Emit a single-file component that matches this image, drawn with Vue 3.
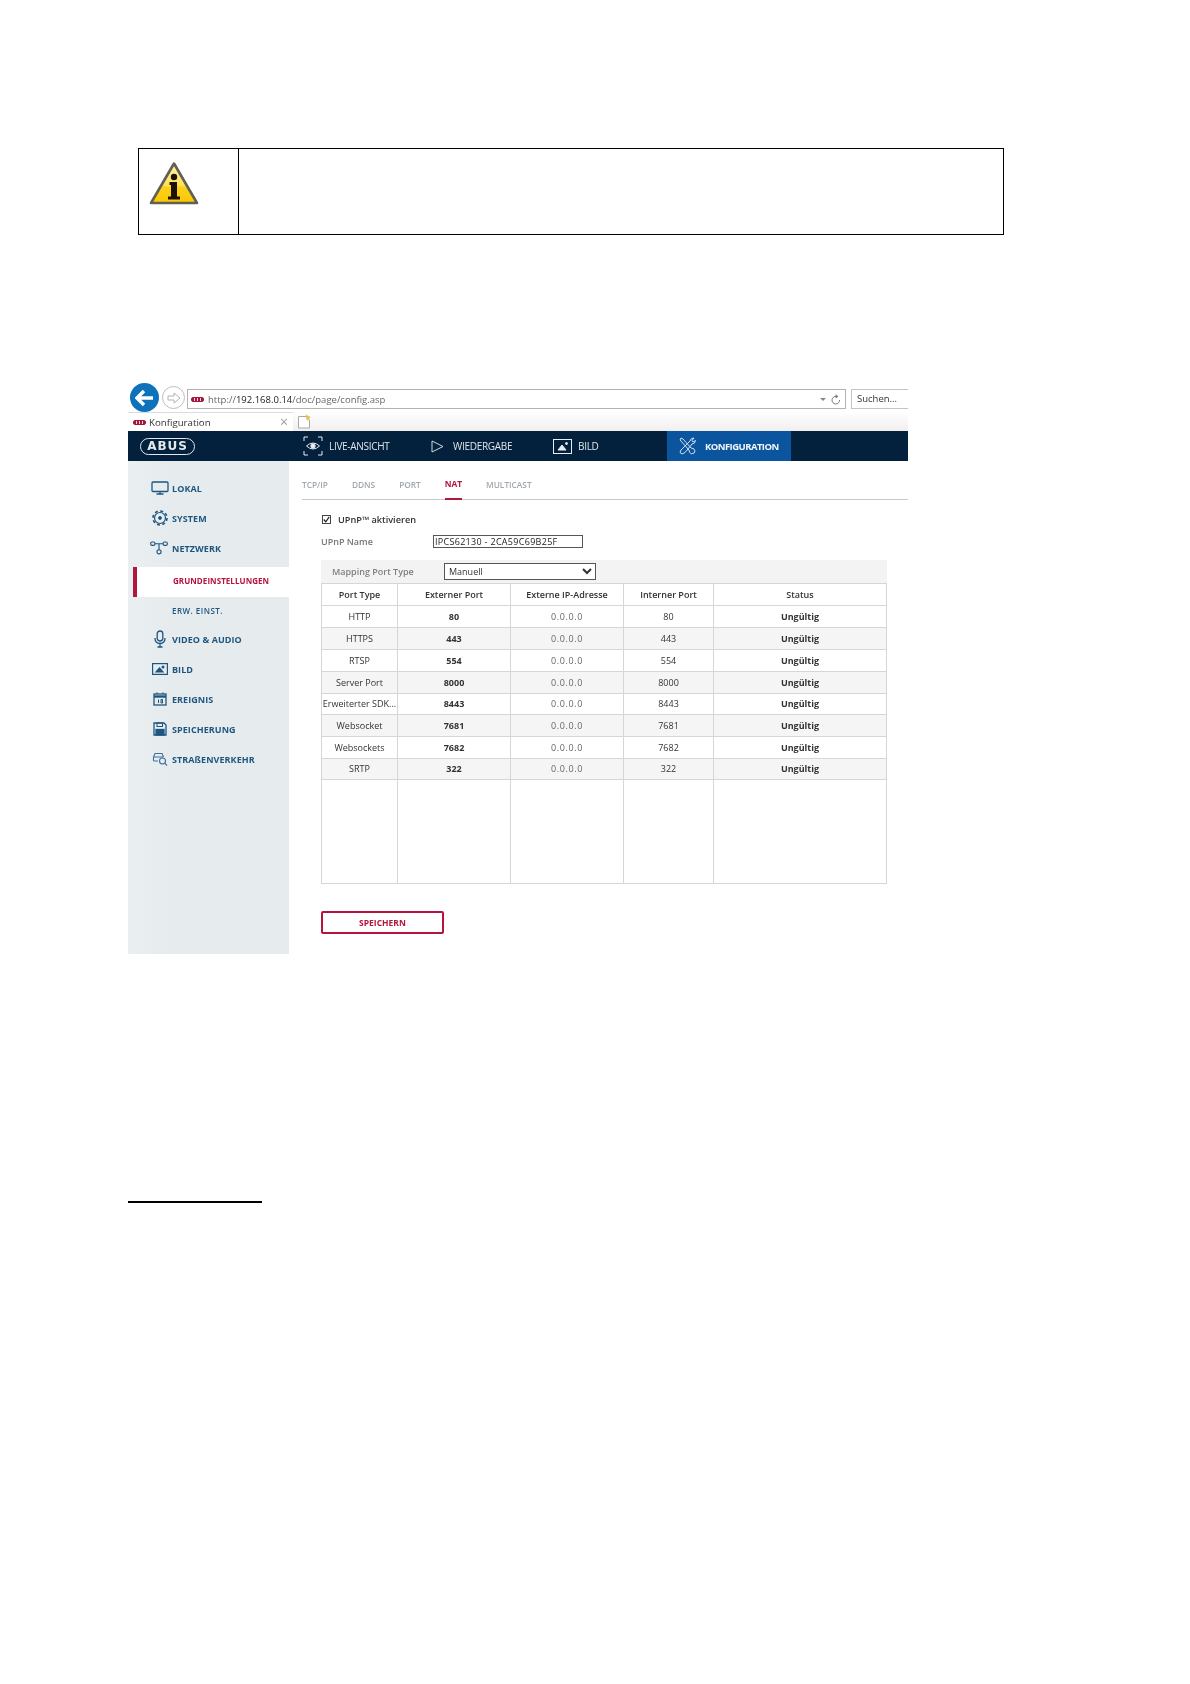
<script setup>
const rows = [
  ['HTTP', '80', '0.0.0.0', '80', 'Ungültig'],
  ['HTTPS', '443', '0.0.0.0', '443', 'Ungültig'],
  ['RTSP', '554', '0.0.0.0', '554', 'Ungültig'],
  ['Server Port', '8000', '0.0.0.0', '8000', 'Ungültig'],
  ['Erweiterter SDK...', '8443', '0.0.0.0', '8443', 'Ungültig'],
  ['Websocket', '7681', '0.0.0.0', '7681', 'Ungültig'],
  ['Websockets', '7682', '0.0.0.0', '7682', 'Ungültig'],
  ['SRTP', '322', '0.0.0.0', '322', 'Ungültig'],
]
const tabs = ['TCP/IP', 'DDNS', 'PORT', 'NAT', 'MULTICAST']
</script>

<template>
  <div class="page">
    <div class="note">
      <div class="note-icon">
        <svg width="52" height="46" viewBox="0 0 52 46">
          <defs>
            <linearGradient id="warn" x1="0" y1="0" x2="0" y2="1">
              <stop offset="0" stop-color="#fff4a8" />
              <stop offset="0.55" stop-color="#fde05a" />
              <stop offset="0.6" stop-color="#fbd11c" />
              <stop offset="1" stop-color="#f8c800" />
            </linearGradient>
          </defs>
          <path d="M26 2.5 L49 42 H3 Z" fill="url(#warn)" stroke="#625f55" stroke-width="2.6" stroke-linejoin="round" />
          <circle cx="26" cy="16" r="3.2" fill="#1a1206" />
          <path d="M21.5 21 H29 V35.5 H32 V38.5 H20 V35.5 H23 V24 H21.5 Z" fill="#1a1206" />
        </svg>
      </div>
      <div class="note-text"></div>
    </div>

    <div class="shot">
      <div class="browser">
        <div class="back">
          <svg width="20" height="18" viewBox="0 0 20 18"><path d="M9 2 L2 9 L9 16 M2.5 9 H18" fill="none" stroke="#fff" stroke-width="3.4" /></svg>
        </div>
        <div class="forward">
          <svg width="14" height="12" viewBox="0 0 14 12"><path d="M1 4 H7 V1 L13 6 L7 11 V8 H1 Z" fill="none" stroke="#b4b4b4" stroke-width="1" /></svg>
        </div>
        <div class="address">
          <span class="favicon"></span>
          <span class="url">http://<b>192.168.0.14</b>/doc/page/config.asp</span>
          <span class="addr-tools">
            <span class="caret"></span>
            <svg width="10" height="11" viewBox="0 0 10 11"><path d="M8.6 6 A3.8 3.8 0 1 1 5.4 2.4" fill="none" stroke="#777" stroke-width="1" /><path d="M4.6 0.3 L7.4 2.4 L4.6 4.4 Z" fill="#777" /></svg>
          </span>
        </div>
        <div class="search">Suchen...</div>
      </div>

      <div class="tabstrip">
        <div class="tab">
          <span class="favicon"></span>
          <span class="tab-title">Konfiguration</span>
          <span class="tab-x">×</span>
        </div>
        <svg class="newtab" width="14" height="15" viewBox="0 0 14 15"><path d="M1.5 2.5 H9 L12.5 6 V14 H1.5 Z" fill="#fff" stroke="#a9a9a9" /><path d="M8.5 0.5 L13.5 3 L10 7 Z" fill="#e9c04e" /></svg>
      </div>

      <div class="nav">
        <div class="logo-cell"><div class="logo">ABUS</div></div>
        <div class="nav-item">
          <svg width="20" height="20" viewBox="0 0 20 20" fill="none" stroke="#e8edf2" stroke-width="1">
            <path d="M1 5 V1 H5 M15 1 H19 V5 M19 15 V19 H15 M5 19 H1 V15" />
            <path d="M3.5 10 Q10 4 16.5 10 Q10 16 3.5 10 Z" />
            <circle cx="10" cy="10" r="2.2" fill="#e8edf2" />
          </svg>
          <span>LIVE-ANSICHT</span>
        </div>
        <div class="nav-item">
          <svg width="13" height="13" viewBox="0 0 13 13" fill="none" stroke="#d0d8e0" stroke-width="1"><path d="M1 1 L12 6.5 L1 12 Z" /></svg>
          <span class="wide-gap">WIEDERGABE</span>
        </div>
        <div class="nav-item">
          <svg width="19" height="15" viewBox="0 0 19 15" fill="none" stroke="#e8edf2" stroke-width="1">
            <rect x="0.5" y="0.5" width="18" height="14" />
            <path d="M5 11 L9 6 L13 11 Z" fill="#e8edf2" />
            <circle cx="13.5" cy="4.5" r="1" fill="#e8edf2" />
          </svg>
          <span>BILD</span>
        </div>
        <div class="nav-item active">
          <svg width="17" height="18" viewBox="0 0 17 18" fill="none" stroke="#cfe0f2" stroke-width="1">
            <path d="M2 1 L1 3 L10 13 Q10 16 12.5 16.8 Q15.8 16.8 16 14 Q15.5 11 12 11 L4 2 Z" />
            <path d="M15 1 Q11.5 1 11 4 L2 13 L1 15.5 L3 17 L6 15.5 L13 7 Q16 7 16.5 3.5 L14 5 L13 3.5 Z" />
          </svg>
          <span>KONFIGURATION</span>
        </div>
      </div>

      <div class="main">
        <aside class="side">
          <div class="side-item">
            <svg width="18" height="14" viewBox="0 0 18 14" fill="none" stroke="#1e5680" stroke-width="1.3"><rect x="1" y="1" width="16" height="9.5" rx="1" /><path d="M9 10.5 V13 M5.5 13 H12.5" /></svg>
            <span>LOKAL</span>
          </div>
          <div class="side-item">
            <svg width="17" height="16" viewBox="0 0 17 16" fill="none" stroke="#1e5680"><circle cx="8.5" cy="8" r="5.5" stroke-width="1.2" /><circle cx="8.5" cy="8" r="7" stroke-width="1.6" stroke-dasharray="3 2.5" /><circle cx="8.5" cy="8" r="1.4" fill="#1e5680" /></svg>
            <span>SYSTEM</span>
          </div>
          <div class="side-item net">
            <svg width="19" height="14" viewBox="0 0 19 14" fill="none" stroke="#1e5680" stroke-width="1.2"><rect x="0.7" y="0.7" width="4.5" height="3.6" rx="1.5" /><rect x="13.8" y="0.7" width="4.5" height="3.6" rx="1.5" /><circle cx="9.5" cy="11" r="2.2" /><path d="M5.2 2.5 H13.8 M9.5 2.5 V8.8" /></svg>
            <span>NETZWERK</span>
          </div>
          <div class="side-sub current"><span>GRUNDEINSTELLUNGEN</span></div>
          <div class="side-sub erw"><span>ERW. EINST.</span></div>
          <div class="side-item video">
            <svg width="12" height="18" viewBox="0 0 12 18" fill="none" stroke="#1e5680" stroke-width="1.3"><rect x="3.2" y="1" width="5.6" height="10" rx="2.8" /><path d="M1 8 Q1 13.5 6 13.5 Q11 13.5 11 8 M6 13.5 V17 M3.5 17 H8.5" /></svg>
            <span>VIDEO &amp; AUDIO</span>
          </div>
          <div class="side-item">
            <svg width="16" height="12" viewBox="0 0 16 12" fill="none" stroke="#1e5680" stroke-width="1.2"><rect x="0.6" y="0.6" width="14.8" height="10.8" /><path d="M4 9 L7.5 5 L11 9 Z" fill="#1e5680" /><circle cx="11" cy="4" r="0.9" fill="#1e5680" /></svg>
            <span>BILD</span>
          </div>
          <div class="side-item">
            <svg width="14" height="14" viewBox="0 0 14 14" fill="none" stroke="#1e5680" stroke-width="1.3"><rect x="1" y="2" width="12" height="11" /><path d="M1 4.5 H13" stroke-width="2.4" /><path d="M4 0.5 V2 M10 0.5 V2" /><path d="M5.5 7.5 V11 M8 7.5 H9.5 V11 H8 Z" stroke-width="1" /></svg>
            <span>EREIGNIS</span>
          </div>
          <div class="side-item">
            <svg width="14" height="14" viewBox="0 0 14 14" fill="none" stroke="#1e5680" stroke-width="1.3"><path d="M1 1 H11 L13 3 V13 H1 Z" /><rect x="4" y="1" width="5.5" height="3.5" stroke-width="1" /><rect x="3" y="7.5" width="8" height="5.5" fill="#1e5680" /></svg>
            <span>SPEICHERUNG</span>
          </div>
          <div class="side-item">
            <svg width="16" height="14" viewBox="0 0 16 14" fill="none" stroke="#3f7199" stroke-width="1.1"><path d="M1.5 9 V5 L3 1.5 H10 L11.5 5 M1.5 5 H11.5 M1.5 9 H6" /><circle cx="10.5" cy="9" r="3" /><path d="M12.7 11.2 L15 13.5" /></svg>
            <span>STRAßENVERKEHR</span>
          </div>
        </aside>

        <section class="content">
          <div class="ctabs">
            <span v-for="t in tabs" :key="t" class="ctab" :class="{ on: t === 'NAT' }">{{ t }}</span>
          </div>
          <div class="form">
            <div class="check-row">
              <span class="check">
                <svg width="7" height="7" viewBox="0 0 7 7"><path d="M0.8 3.5 L2.8 5.8 L6.2 0.8" fill="none" stroke="#222" stroke-width="1.2" /></svg>
              </span>
              <span>UPnP™ aktivieren</span>
            </div>
            <div class="name-row">
              <span class="name-label">UPnP Name</span>
              <input class="name-input" type="text" value="IPCS62130 - 2CA59C69B25F" />
            </div>
            <div class="map-row">
              <span class="map-label">Mapping Port Type</span>
              <select class="map-select"><option>Manuell</option></select>
            </div>
            <table class="ports">
              <colgroup>
                <col class="c1" /><col class="c2" /><col class="c3" /><col class="c4" /><col />
              </colgroup>
              <thead>
                <tr>
                  <th>Port Type</th><th>Externer Port</th><th>Externe IP-Adresse</th><th>Interner Port</th><th>Status</th>
                </tr>
              </thead>
              <tbody>
                <tr v-for="r in rows" :key="r[0]">
                  <td>{{ r[0] }}</td>
                  <td class="bold">{{ r[1] }}</td>
                  <td class="dim">{{ r[2] }}</td>
                  <td>{{ r[3] }}</td>
                  <td class="bold">{{ r[4] }}</td>
                </tr>
                <tr class="filler"><td></td><td></td><td></td><td></td><td></td></tr>
              </tbody>
            </table>
            <button class="save" type="button">SPEICHERN</button>
          </div>
        </section>
      </div>
    </div>

    <div class="footnote-rule"></div>
  </div>
</template>

<style>
html, body { margin: 0; background: #fff; }
</style>

<style scoped>
.page {
  width: 1190px;
  height: 1684px;
  box-sizing: border-box;
  padding-top: 148px;
  background: #fff;
  overflow: hidden;
  font-family: "Open Sans", "Liberation Sans", sans-serif;
}
.note {
  margin-left: 138px;
  width: 866px;
  height: 87px;
  box-sizing: border-box;
  border: 1px solid #000;
  display: grid;
  grid-template-columns: 100px 1fr;
}
.note-icon {
  border-right: 1px solid #000;
  padding: 12px 0 0 9px;
}
.note-icon svg { display: block; }

.shot {
  margin: 148px 0 0 128px;
  width: 780px;
  filter: blur(0.3px);
}
.browser {
  height: 29px;
  display: flex;
  align-items: center;
}
.back {
  width: 29px;
  height: 29px;
  margin-left: 2px;
  border-radius: 50%;
  background: #0d72b9;
  display: flex;
  align-items: center;
  justify-content: center;
  flex: none;
}
.forward {
  width: 21px;
  height: 21px;
  margin-left: 3px;
  border: 1px solid #bdbdbd;
  border-radius: 50%;
  display: flex;
  align-items: center;
  justify-content: center;
  flex: none;
}
.address {
  margin: 3px 0 0 2px;
  width: 659px;
  height: 20px;
  box-sizing: border-box;
  border: 1px solid #b3b3b3;
  display: flex;
  align-items: center;
  padding-left: 3px;
  flex: none;
}
.favicon {
  width: 13px;
  height: 5px;
  background: repeating-linear-gradient(90deg, #a5163c 0 2px, #f3d5dc 2px 3px);
  border: 1px solid #a5163c;
  border-radius: 2px;
  box-sizing: border-box;
  flex: none;
}
.url {
  margin-left: 4px;
  font-size: 9.5px;
  color: #666;
  font-family: "Open Sans", sans-serif;
}
.url b { font-weight: 400; color: #222; }
.addr-tools {
  margin-left: auto;
  display: flex;
  align-items: center;
  gap: 5px;
  padding-right: 4px;
}
.caret {
  width: 0;
  height: 0;
  border-left: 3px solid transparent;
  border-right: 3px solid transparent;
  border-top: 3px solid #888;
}
.search {
  margin: 3px 0 0 5px;
  flex: 1;
  height: 20px;
  box-sizing: border-box;
  border: 1px solid #c4c4c4;
  border-right: 0;
  padding-left: 5px;
  font-size: 9.5px;
  line-height: 18px;
  color: #333;
}
.tabstrip {
  height: 19px;
  display: flex;
  align-items: center;
  background: linear-gradient(180deg, #fff 0%, #f1eeee 100%);
}
.tab {
  width: 165px;
  height: 19px;
  background: #fff;
  display: flex;
  align-items: center;
  box-sizing: border-box;
  padding: 0 5px;
  border-top: 1px solid #dcdcdc;
}
.tab-title {
  margin-left: 3px;
  font-size: 9.7px;
  color: #333;
}
.tab-x {
  margin-left: auto;
  color: #9a9a9a;
  font-size: 14px;
  line-height: 14px;
}
.newtab { margin-left: 4px; }

.nav {
  height: 30px;
  background: #03203c;
  display: grid;
  grid-template-columns: 175px 128px 122px 114px 124px 1fr;
  color: #dfe5ea;
  font-size: 10px;
}
.logo-cell {
  display: flex;
  align-items: center;
  padding-left: 12px;
}
.logo {
  width: 55px;
  height: 17px;
  box-sizing: border-box;
  border: 1.5px solid #e5e8ec;
  border-radius: 8.5px;
  color: #e5e8ec;
  font-family: "DejaVu Sans", sans-serif;
  font-weight: 700;
  font-size: 12px;
  line-height: 14px;
  text-align: center;
  letter-spacing: 0.9px;
}
.nav-item {
  display: flex;
  align-items: center;
  gap: 6px;
  letter-spacing: -0.3px;
}
.wide-gap { margin-left: 3px; }
.nav-item svg { flex: none; }
.nav-item.active {
  background: #0a559e;
  padding-left: 12px;
  gap: 9px;
  font-size: 9.5px;
  font-weight: 700;
  letter-spacing: -0.55px;
  color: #f2f6fa;
}

.main {
  display: flex;
  height: 493px;
}
.side {
  width: 161px;
  flex: none;
  box-sizing: border-box;
  padding-top: 12px;
  background: linear-gradient(90deg, #eaeff2 0, #e6ebee 40px);
}
.side-item {
  height: 30px;
  box-sizing: border-box;
  padding-left: 23px;
  display: flex;
  align-items: center;
  gap: 3px;
  color: #1e5680;
  font-size: 9px;
  font-weight: 700;
  letter-spacing: 0.07px;
}
.side-item svg { flex: none; width: 18px; }
.side-item.net { padding-left: 22px; gap: 4px; }
.side-item.video { height: 28px; margin-bottom: 1px; }
.side-sub {
  height: 28px;
  box-sizing: border-box;
  padding-left: 44px;
  display: flex;
  align-items: center;
  color: #1e5680;
  font-size: 8px;
  font-weight: 600;
  letter-spacing: 0.48px;
}
.side-sub.erw { padding-bottom: 2px; }
.side-sub.current {
  height: 30px;
  margin: 4px 0 0 5px;
  padding: 0 0 3px 36px;
  background: #fff;
  border-left: 4px solid #b5143c;
  color: #b5143c;
  font-weight: 700;
  letter-spacing: 0.06px;
}

.content {
  flex: 1;
  min-width: 0;
  padding-left: 13px;
}
.ctabs {
  height: 39px;
  box-sizing: border-box;
  border-bottom: 1px solid #c9c9c9;
  display: flex;
  gap: 24px;
  align-items: flex-end;
}
.ctab {
  height: 22px;
  font-size: 8.3px;
  color: #a1a8ae;
  font-weight: 600;
  line-height: 14px;
  box-sizing: border-box;
  margin-bottom: -1px;
}
.ctab.on {
  color: #b5143c;
  font-weight: 700;
  border-bottom: 2px solid #b5143c;
  line-height: 12px;
}
.form {
  padding: 11px 0 0 19px;
  box-sizing: border-box;
  width: 585px;
}
.check-row {
  height: 16px;
  display: flex;
  align-items: center;
  gap: 7px;
  font-size: 9.2px;
  font-weight: 600;
  color: #333;
}
.check {
  margin-left: 1px;
  width: 9px;
  height: 9px;
  box-sizing: border-box;
  border: 1px solid #444;
  background: #fff;
  display: flex;
  align-items: center;
  justify-content: center;
}
.name-row {
  height: 16px;
  margin-top: 6px;
  display: flex;
  align-items: center;
  font-size: 9px;
  font-weight: 600;
  color: #777;
}
.name-label { width: 112px; flex: none; }
.name-input {
  width: 146px;
  height: 11px;
  box-sizing: content-box;
  border: 1px solid #555;
  padding: 0 1px;
  margin: 0;
  font-family: inherit;
  font-size: 9px;
  letter-spacing: 0.3px;
  color: #222;
  outline: none;
}
.map-row {
  height: 23px;
  margin-top: 11px;
  background: #f3f3f3;
  display: flex;
  align-items: center;
  font-size: 9px;
  font-weight: 600;
  color: #808080;
  padding-left: 11px;
  box-sizing: border-box;
  width: 566px;
}
.map-label { width: 112px; flex: none; }
.map-select {
  width: 152px;
  height: 17px;
  font-family: inherit;
  font-size: 9px;
  color: #333;
  padding: 0;
  border: 1px solid #555;
  background: #fff;
}
.ports {
  width: 566px;
  table-layout: fixed;
  border-collapse: collapse;
  border: 1px solid #c9c9c9;
  font-size: 9px;
  color: #333;
}
.c1 { width: 76px; }
.c2, .c3 { width: 113px; }
.c4 { width: 90px; }
.ports th, .ports td {
  box-sizing: border-box;
  border: 1px solid #d6d6d6;
  padding: 0;
  height: 22px;
  line-height: 12px;
  text-align: center;
  white-space: nowrap;
  overflow: hidden;
}
.ports th { font-weight: 600; }
.ports tbody tr { background: #fff; }
.ports tbody tr:nth-child(even) { background: #f5f5f5; }
.ports tbody tr:nth-child(5) td,
.ports tbody tr:nth-child(8) td { height: 21px; }
.ports .filler td { height: 104px; background: #fff; border-top-color: #c9c9c9; }
.bold { font-weight: 700; }
.dim { color: #666; letter-spacing: 0.6px; }
.save {
  display: block;
  margin-top: 27px;
  width: 123px;
  height: 23px;
  box-sizing: border-box;
  border: 2px solid #b5143c;
  border-radius: 2px;
  background: #fff;
  color: #b5143c;
  font-family: inherit;
  font-size: 8.5px;
  font-weight: 700;
  padding: 0;
}
.footnote-rule {
  margin: 247px 0 0 128px;
  width: 134px;
  height: 2px;
  background: #000;
}
</style>
